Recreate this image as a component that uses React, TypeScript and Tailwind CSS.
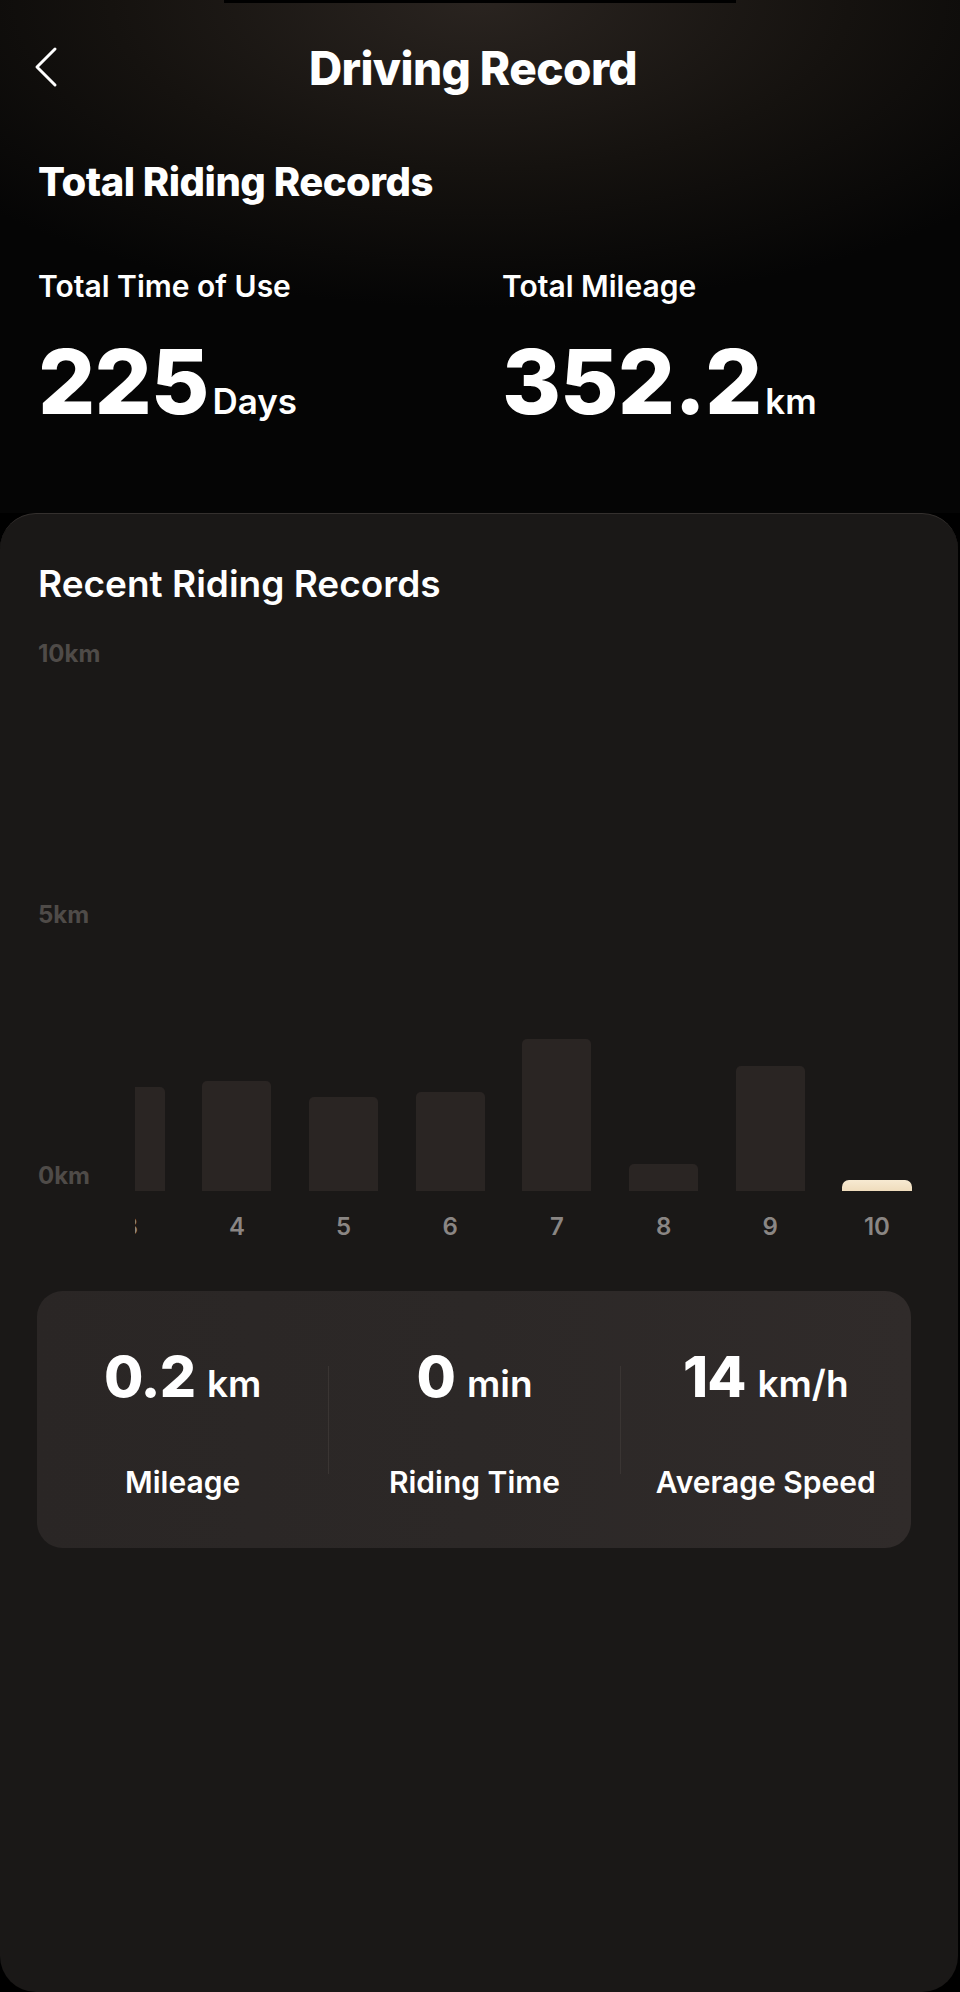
// ==========================================
// Driving Record Screen
// ==========================================

interface DayBar {
  label: string;
  height: number;
  active?: boolean;
}

const bars: DayBar[] = [
  { label: '3', height: 104 },
  { label: '4', height: 110 },
  { label: '5', height: 94 },
  { label: '6', height: 99 },
  { label: '7', height: 152 },
  { label: '8', height: 27 },
  { label: '9', height: 125 },
  { label: '10', height: 11, active: true },
];

const stats = [
  { value: '0.2', unit: 'km', label: 'Mileage' },
  { value: '0', unit: 'min', label: 'Riding Time' },
  { value: '14', unit: 'km/h', label: 'Average Speed' },
];

function BackIcon() {
  return (
    <svg width="26" height="42" viewBox="0 0 26 42" fill="none" className="absolute left-[33px] top-[1px]">
      <path d="M22 3 L4 21 L22 39" stroke="white" strokeWidth="3" strokeLinecap="round" strokeLinejoin="round" />
    </svg>
  );
}

function Header() {
  return (
    <div className="flex h-[513px] flex-col bg-[radial-gradient(ellipse_70%_60%_at_50%_0%,#2a2420_0%,#15120f_55%,#050505_100%)]">
      <div className="mx-auto h-[3px] w-[512px] bg-black" />
      <div className="relative mt-[42px] flex h-[46px] items-center justify-center pr-[14px]">
        <BackIcon />
        <h1 className="text-[46px] font-extrabold leading-none tracking-[-0.6px] text-white">Driving Record</h1>
      </div>
      <h2 className="ml-[38px] mt-[71px] text-[40px] font-extrabold leading-none tracking-[-0.5px] text-white">
        Total Riding Records
      </h2>
      <div className="mt-[69px] grid grid-cols-[464px_1fr] pl-[38px]">
        <Summary label="Total Time of Use" value="225" unit="Days" />
        <Summary label="Total Mileage" value="352.2" unit="km" />
      </div>
    </div>
  );
}

function Summary({ label, value, unit }: { label: string; value: string; unit: string }) {
  return (
    <div className="flex flex-col">
      <span className="text-[30px] font-semibold leading-none text-white">{label}</span>
      <div className="mt-[36px] flex items-baseline">
        <span className="text-[90px] font-extrabold leading-none tracking-[-1px] text-white">{value}</span>
        <span className="ml-[4px] text-[35px] font-semibold leading-none text-white">{unit}</span>
      </div>
    </div>
  );
}

function Chart() {
  return (
    <div className="ml-[38px] mt-[40px] flex">
      <div className="flex h-[546px] w-[97px] shrink-0 flex-col justify-between text-[24px] font-bold leading-none text-[#4f4b48]">
        <span>10km</span>
        <span>5km</span>
        <span>0km</span>
      </div>
      <div className="flex-1 overflow-hidden">
        <div className="ml-[-58px] flex">
          {bars.map((b) => (
            <div key={b.label} className="flex w-[106.67px] shrink-0 flex-col items-center">
              <div className="flex h-[549px] items-end">
                <div
                  className={
                    b.active
                      ? 'w-[70px] rounded-t-[7px] bg-gradient-to-b from-[#f7ead2] to-[#efdcbc]'
                      : 'w-[69px] rounded-t-[5px] bg-[#2a2523]'
                  }
                  style={{ height: b.height }}
                />
              </div>
              <span className="mt-[24px] text-[24px] font-semibold leading-none text-[#8a8684]">{b.label}</span>
            </div>
          ))}
        </div>
      </div>
    </div>
  );
}

function StatsCard() {
  return (
    <div className="mx-[37px] mt-[52px] flex h-[257px] w-[874px] items-center rounded-[26px] bg-gradient-to-r from-[#2a2625] via-[#2c2827] to-[#302b2a]">
      {stats.map((s, i) => (
        <div key={s.label} className="flex flex-1 items-center">
          {i > 0 && <div className="h-[108px] w-px bg-[#3a3533]" />}
          <div className="flex flex-1 flex-col items-center pt-[6px]">
            <div className="flex items-baseline text-white">
              <span className="text-[57px] font-extrabold leading-none tracking-[-1px]">{s.value}</span>
              <span className="ml-[12px] text-[37px] font-semibold leading-none">{s.unit}</span>
            </div>
            <span className="mt-[62px] text-[30px] font-semibold leading-none text-white">{s.label}</span>
          </div>
        </div>
      ))}
    </div>
  );
}

export default function App() {
  return (
    <div className="flex min-h-[1992px] w-[960px] flex-col bg-black font-['Inter',sans-serif]">
      <Header />
      <div className="mr-[2px] flex flex-1 flex-col rounded-[36px] border-t border-[#34302e] bg-[#1a1817]">
        <h3 className="ml-[38px] mt-[51px] text-[37px] font-semibold leading-none text-white">
          Recent Riding Records
        </h3>
        <Chart />
        <StatsCard />
      </div>
    </div>
  );
}
